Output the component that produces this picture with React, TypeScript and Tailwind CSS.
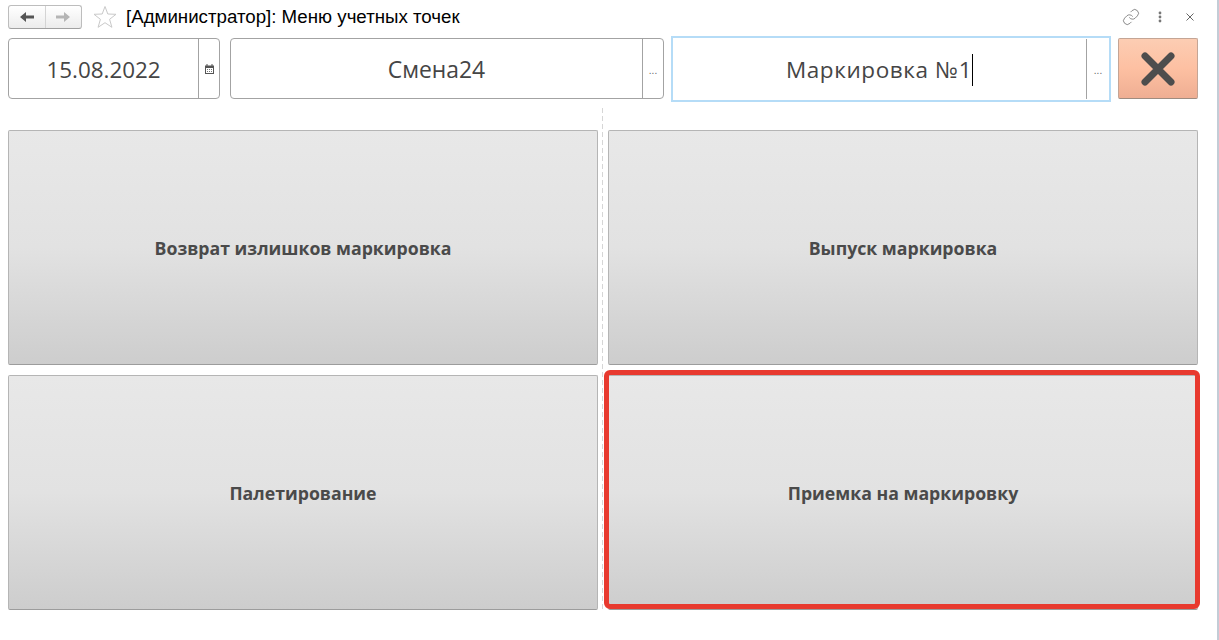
import { Link } from "lucide-react"

function NavArrow({ dir, color }: { dir: "left" | "right"; color: string }) {
  return (
    <svg width="16" height="12" viewBox="0 0 16 12" className={dir === "right" ? "rotate-180" : ""}>
      <path d="M1 6 L7 1 V4.5 H15 V7.5 H7 V11 Z" fill={color} />
    </svg>
  )
}

function Star() {
  return (
    <svg width="24" height="24" viewBox="0 0 24 24" fill="none">
      <path
        d="M12 1.5 L14.8 9 L23 9.3 L16.6 14.3 L18.9 22.3 L12 17.7 L5.1 22.3 L7.4 14.3 L1 9.3 L9.2 9 Z"
        stroke="#c9c9c9"
        strokeWidth="1"
        strokeLinejoin="round"
      />
    </svg>
  )
}

function CalendarIcon() {
  return (
    <svg width="9" height="10" viewBox="0 0 9 10">
      <path d="M0 1.5 H9 V10 H0 Z M1 4 V9 H8 V4 Z" fill="#555" fillRule="evenodd" />
      <rect x="1.5" y="0" width="1" height="2" fill="#555" />
      <rect x="6.5" y="0" width="1" height="2" fill="#555" />
      <path d="M2 5 H3 V6 H2 Z M4 5 H5 V6 H4 Z M6 5 H7 V6 H6 Z M2 7 H3 V8 H2 Z M4 7 H5 V8 H4 Z M6 7 H7 V8 H6 Z" fill="#777" />
    </svg>
  )
}

function Field({ text, width, size, suffix }: { text: string; width: string; size: string; suffix: React.ReactNode }) {
  return (
    <div className={`${width} h-[61px] flex rounded-[4px] border border-[#a3a3a3] bg-white`}>
      <div className={`${size} flex-1 flex items-center justify-center pt-[3px] text-[#454545] font-['Open_Sans',sans-serif]`}>
        {text}
      </div>
      {suffix}
    </div>
  )
}

function Dots() {
  return <div className="w-[21px] border-l border-[#a3a3a3] flex items-center justify-center text-[10px] text-[#666] pt-1">...</div>
}

function BigButton({ label }: { label: string }) {
  return (
    <button className="w-[590px] h-[235px] pt-[2px] rounded-[2px] border border-[#b5b5b5] border-b-[#9c9c9c] bg-gradient-to-b from-[#e8e8e8] via-[#e2e2e2] to-[#cdcdcd] text-[17.7px] font-bold text-[#4a4a4a] font-['Open_Sans',sans-serif]">
      {label}
    </button>
  )
}

export default function App() {
  return (
    <div className="w-[1219px] h-[640px] bg-white overflow-hidden border-r-2 border-[#c3ccd6] font-['Liberation_Sans',sans-serif]">
      <div className="h-[38px] flex items-center pl-2 pr-[23px] pb-[6px] pt-[2px]">
        <div className="flex w-[74px] h-[24px] rounded-[3px] border border-[#bdbdbd] border-b-[#a0a0a0] bg-gradient-to-b from-white to-[#ececec]">
          <div className="flex-1 flex items-center justify-center border-r border-[#d4d4d4]">
            <NavArrow dir="left" color="#555" />
          </div>
          <div className="flex-1 flex items-center justify-center">
            <NavArrow dir="right" color="#b5b5b5" />
          </div>
        </div>
        <div className="ml-[11px]">
          <Star />
        </div>
        <div className="ml-[9px] text-[18.7px] leading-none text-black">[Администратор]: Меню учетных точек</div>
        <div className="ml-auto flex items-center">
          <Link size={18} strokeWidth={1} color="#666" />
          <svg width="4" height="12" viewBox="0 0 4 12" className="ml-[18px]">
            <circle cx="2" cy="2" r="1.4" fill="#777" />
            <circle cx="2" cy="6" r="1.4" fill="#777" />
            <circle cx="2" cy="10" r="1.4" fill="#777" />
          </svg>
          <svg width="8" height="8" viewBox="0 0 8 8" className="ml-[24px]">
            <path d="M0.5 0.5 L7.5 7.5 M7.5 0.5 L0.5 7.5" stroke="#666" strokeWidth="1" />
          </svg>
        </div>
      </div>

      <div className="flex items-center pl-2 h-[61px]">
        <Field
          text="15.08.2022"
          width="w-[212px]"
          size="text-[22.4px]"
          suffix={
            <div className="w-[21px] border-l border-[#a3a3a3] flex items-center justify-center">
              <CalendarIcon />
            </div>
          }
        />
        <div className="ml-[10px]">
          <Field text="Смена24" width="w-[434px]" size="text-[22.9px]" suffix={<Dots />} />
        </div>
        <div className="ml-[7px] w-[440px] h-[66px] flex items-stretch border-2 border-[#b5dcf7] bg-white">
          <div className="flex-1 flex items-center justify-center pt-[3px] text-[22.5px] tracking-[0.6px] text-[#454545] font-['Open_Sans',sans-serif]">
            Маркировка №1
            <span className="w-px h-[32px] bg-black" />
          </div>
          <div className="my-[1px] w-[23px] border-l border-[#a3a3a3] flex items-center justify-center text-[10px] text-[#666] pt-1">...</div>
        </div>
        <button className="ml-[7px] w-[80px] h-[61px] rounded-[2px] border border-[#c4a595] border-b-[#9e8c80] bg-gradient-to-b from-[#fccdb3] via-[#fdc0a2] to-[#efae93] flex items-center justify-center">
          <svg width="34" height="34" viewBox="0 0 34 34">
            <path d="M4 4 L30 30 M30 4 L4 30" stroke="#4d4d4d" strokeWidth="7" strokeLinecap="round" />
          </svg>
        </button>
      </div>

      <div className="flex pl-2 mt-[9px]">
        <div className="flex flex-col gap-[10px] pt-[22px]">
          <BigButton label="Возврат излишков маркировка" />
          <BigButton label="Палетирование" />
        </div>
        <div className="w-[10px] h-[502px] pl-1">
          <div className="w-px h-full bg-[repeating-linear-gradient(to_bottom,#d6d6d6_0,#d6d6d6_5px,transparent_5px,transparent_8px)]" />
        </div>
        <div className="flex flex-col gap-[10px] pt-[22px]">
          <BigButton label="Выпуск маркировка" />
          <div className="relative">
            <BigButton label="Приемка на маркировку" />
            <div className="absolute -left-1 -right-[2px] -top-[5px] bottom-px rounded-[6px] border-[5px] border-[#e83a2f]" />
          </div>
        </div>
      </div>
    </div>
  )
}
